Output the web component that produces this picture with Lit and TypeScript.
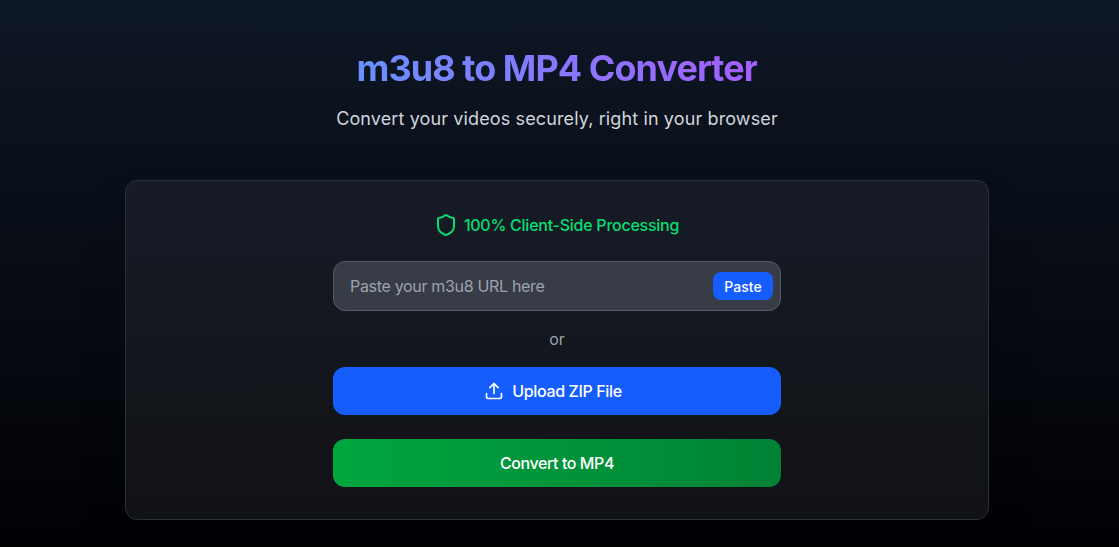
import { LitElement, html, css } from "lit";
import { customElement } from "lit/decorators.js";

@customElement("app-root")
export class AppRoot extends LitElement {
  static styles = css`
    :host { display: block; }
    * { box-sizing: border-box; }
    .page {
      height: 547px; overflow: hidden;
      background: linear-gradient(180deg, #0e1725 0%, #010104 100%);
      font-family: Inter, "Liberation Sans", sans-serif;
      padding: 48px 5px 0 0;
      display: flex; flex-direction: column; align-items: center;
    }
    h1 {
      margin: 0 0 17px; font-size: 36px; line-height: 40px; font-weight: 700;
      letter-spacing: -0.95px;
      background: linear-gradient(90deg, #6a90ff, #a45ffc);
      -webkit-background-clip: text; background-clip: text; color: transparent;
    }
    .sub { margin: 0 0 47px; font-size: 18px; line-height: 28px; color: #d1d5db; letter-spacing: 0.12px; }
    .card {
      width: 864px; height: 340px; padding: 32px; border-radius: 12px;
      border: 1px solid #2b2f38;
      background: linear-gradient(180deg, #161b27 0%, #111214 100%);
      box-shadow: 0 25px 50px -12px rgba(0, 0, 0, 0.25);
      display: flex; flex-direction: column; align-items: center;
    }
    .badge {
      display: flex; align-items: center; gap: 6px; height: 24px; margin-bottom: 24px;
      padding-right: 1px;
      color: #05df72; font-size: 16px; font-weight: 450; letter-spacing: -0.25px;
    }
    .col { width: 448px; display: flex; flex-direction: column; }
    .input {
      height: 50px; border-radius: 12px; border: 1px solid #565a65; background: #383c46;
      display: flex; align-items: center; justify-content: space-between;
      padding: 0 7px 0 16px;
      color: #9ca3af; font-size: 16px; letter-spacing: -0.32px;
    }
    .paste {
      height: 28px; width: 60px; border: none; border-radius: 8px; background: #155dfc;
      color: #fff; font: 500 14px Inter, sans-serif; padding: 0;
    }
    .or { margin: 16px 0; text-align: center; line-height: 24px; font-size: 16px; color: #9ca3af; }
    .btn {
      height: 48px; border: none; border-radius: 12px; color: #fff;
      font: 450 16px Inter, sans-serif; display: flex; align-items: center; justify-content: center; gap: 8px;
      letter-spacing: -0.36px;
    }
    .upload { background: #155dfc; margin-bottom: 24px; padding: 0 8px 0 0; }
    .convert { background: linear-gradient(90deg, #00a63e, #008236); letter-spacing: -0.42px; }
  `;

  render() {
    return html`
      <div class="page">
        <h1>m3u8 to MP4 Converter</h1>
        <p class="sub">Convert your videos securely, right in your browser</p>
        <div class="card">
          <div class="badge">
            <svg width="24" height="24" viewBox="0 0 24 24" fill="none" stroke="currentColor" stroke-width="2" stroke-linecap="round" stroke-linejoin="round">
              <path d="M20 13c0 5-3.5 7.5-7.66 8.95a1 1 0 0 1-.67-.01C7.5 20.5 4 18 4 13V6a1 1 0 0 1 1-1c2 0 4.5-1.2 6.24-2.72a1.17 1.17 0 0 1 1.52 0C14.51 3.81 17 5 19 5a1 1 0 0 1 1 1z"/>
            </svg>
            <span>100% Client-Side Processing</span>
          </div>
          <div class="col">
            <div class="input">
              <span>Paste your m3u8 URL here</span>
              <button class="paste">Paste</button>
            </div>
            <div class="or">or</div>
            <button class="btn upload">
              <svg width="20" height="20" viewBox="0 0 24 24" fill="none" stroke="currentColor" stroke-width="2" stroke-linecap="round" stroke-linejoin="round">
                <path d="M12 15V3"/><path d="M21 15v4a2 2 0 0 1-2 2H5a2 2 0 0 1-2-2v-4"/><path d="m17 8-5-5-5 5"/>
              </svg>
              <span>Upload ZIP File</span>
            </button>
            <button class="btn convert">Convert to MP4</button>
          </div>
        </div>
      </div>
    `;
  }
}
